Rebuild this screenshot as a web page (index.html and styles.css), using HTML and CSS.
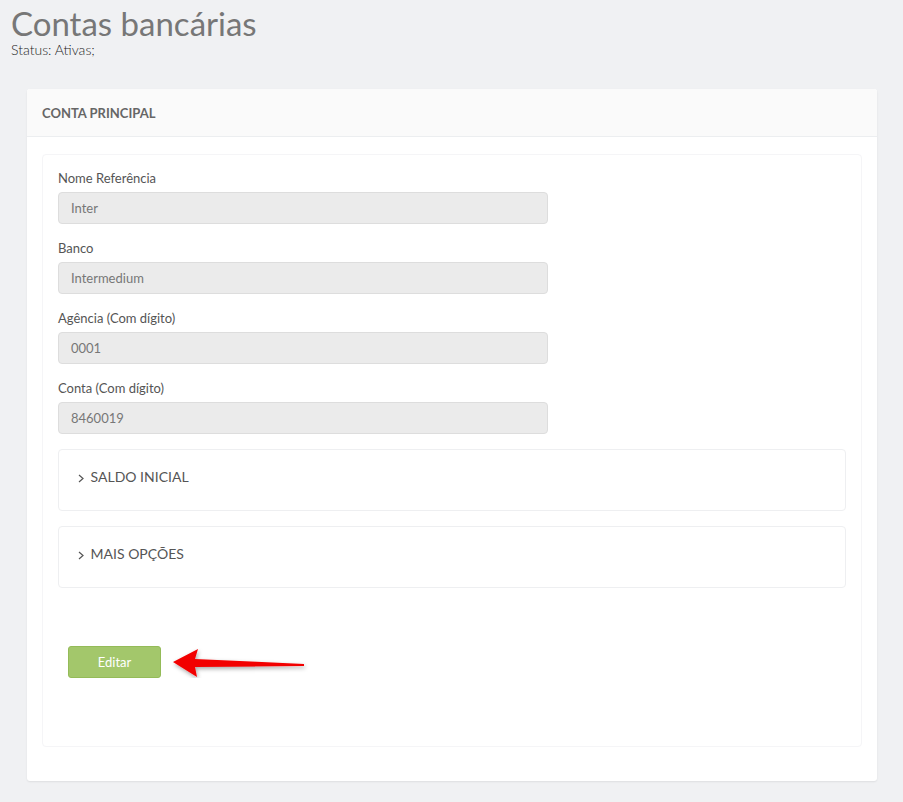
FILE: index.html
```html
<!DOCTYPE html>
<html lang="pt-BR">
<head>
    <meta charset="UTF-8">
    <meta name="viewport" content="width=device-width, initial-scale=1.0">
    <title>Contas bancárias</title>
    <link rel="stylesheet" href="styles.css">
</head>
<body>

<div class="page-head">
    <h1>Contas bancárias</h1>
    <div class="status">Status: Ativas;</div>
</div>

<div class="card">
    <div class="card-header">CONTA PRINCIPAL</div>
    <div class="card-body">
        <div class="panel">
            <div class="fields">
                <div class="field">
                    <label>Nome Referência</label>
                    <div class="input">Inter</div>
                </div>
                <div class="field">
                    <label>Banco</label>
                    <div class="input">Intermedium</div>
                </div>
                <div class="field">
                    <label>Agência (Com dígito)</label>
                    <div class="input">0001</div>
                </div>
                <div class="field">
                    <label>Conta (Com dígito)</label>
                    <div class="input">8460019</div>
                </div>
            </div>

            <div class="collapse">
                <svg class="chev" width="6" height="9" viewBox="0 0 6 9"><polyline points="1,1 5,4.5 1,8" fill="none" stroke="#555" stroke-width="1.2"/></svg>
                SALDO INICIAL
            </div>
            <div class="collapse">
                <svg class="chev" width="6" height="9" viewBox="0 0 6 9"><polyline points="1,1 5,4.5 1,8" fill="none" stroke="#555" stroke-width="1.2"/></svg>
                MAIS OPÇÕES
            </div>

            <div class="actions">
                <button class="btn-edit">Editar</button>
                <svg class="arrow" width="140" height="30" viewBox="0 0 140 30">
                    <defs>
                        <filter id="sh" x="-10%" y="-40%" width="130%" height="200%">
                            <feDropShadow dx="1" dy="2" stdDeviation="2" flood-color="#000" flood-opacity="0.35"/>
                        </filter>
                    </defs>
                    <path d="M3 14 L28 1 L25 11 L134 16 L134 18 L25 19 L27 29 Z" fill="#f20000" filter="url(#sh)"/>
                </svg>
            </div>
        </div>
    </div>
</div>

</body>
</html>
```

FILE: styles.css
```css
body {
    font-family: 'Lato', 'Liberation Sans', sans-serif;
    background-color: #f0f1f3;
    margin: 0;
    padding: 0 26px 22px 27px;
    color: #555;
}
.page-head {
    padding: 3px 0 33px 0;
    margin-left: -16px;
}
h1 {
    font-size: 33px;
    font-weight: 400;
    color: #777;
    margin: 0;
    line-height: 40px;
}
.status {
    font-size: 14px;
    font-weight: 300;
    color: #1e1e1e;
    line-height: 13px;
}
.card {
    background-color: #fff;
    border-radius: 3px;
    box-shadow: 0 1px 2px rgba(0,0,0,0.08);
}
.card-header {
    height: 47px;
    line-height: 49px;
    padding: 0 15px;
    font-size: 13px;
    font-weight: 700;
    color: #666;
    background-color: #fafafa;
    border-bottom: 1px solid #eceef0;
    border-radius: 3px 3px 0 0;
}
.card-body {
    padding: 17px 15px 34px 15px;
}
.panel {
    border: 1px solid #f5f5f7;
    border-radius: 4px;
    padding: 15px 15px 68px 15px;
}
.field {
    margin-bottom: 16px;
}
.field:last-child {
    margin-bottom: 15px;
}
.field label {
    display: block;
    font-size: 13px;
    line-height: 16px;
    color: #555;
    margin-bottom: 6px;
}
.input {
    height: 30px;
    line-height: 30px;
    padding: 0 12px;
    width: 464px;
    background-color: #ebebeb;
    border: 1px solid #dddddd;
    border-radius: 4px;
    font-size: 13px;
    color: #777;
}
.collapse {
    height: 60px;
    line-height: 54px;
    border: 1px solid #eeeff1;
    border-radius: 4px;
    padding: 0 19px;
    font-size: 14px;
    color: #555;
    margin-bottom: 15px;
}
.chev {
    margin-right: 3px;
    vertical-align: -1px;
}
.actions {
    display: flex;
    align-items: center;
    margin-top: 58px;
    padding-left: 10px;
}
.btn-edit {
    width: 93px;
    height: 32px;
    background-color: #a3c76b;
    border: 1px solid #94bb58;
    border-radius: 3px;
    color: #fff;
    font-family: 'Lato', 'Liberation Sans', sans-serif;
    font-size: 13px;
    cursor: pointer;
}
.arrow {
    margin-left: 9px;
    margin-top: 2px;
}
```
